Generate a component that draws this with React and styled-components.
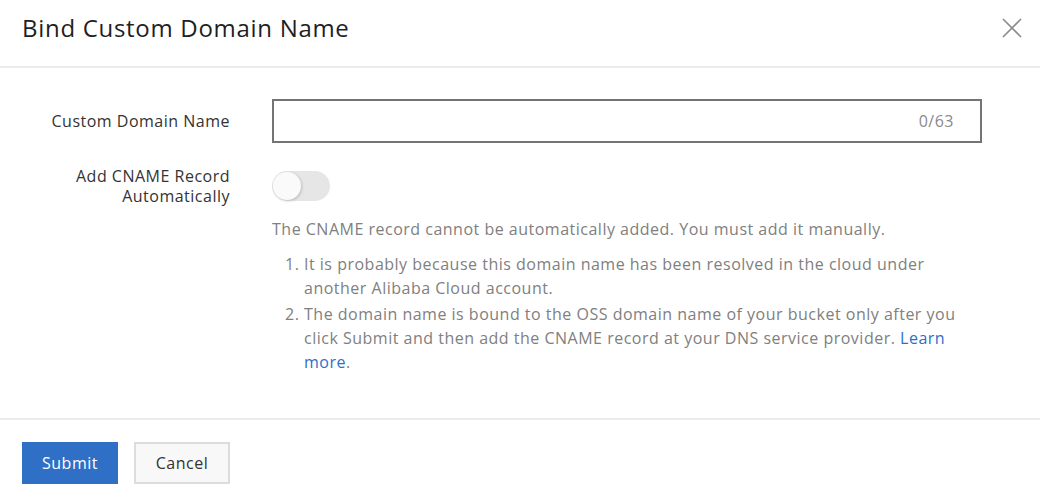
import React, { useState } from 'react';
import styled, { createGlobalStyle } from 'styled-components';

const GlobalStyle = createGlobalStyle`
  html, body {
    margin: 0;
    padding: 0;
    background: #fff;
  }
  body {
    font-family: 'Open Sans', 'Liberation Sans', Arial, sans-serif;
    color: #333;
    letter-spacing: 0.5px;
    -webkit-font-smoothing: antialiased;
  }
`;

const Dialog = styled.div`
  width: 1040px;
  height: 498px;
  display: flex;
  flex-direction: column;
  background: #fff;
`;

const Header = styled.div`
  height: 68px;
  display: flex;
  align-items: center;
  justify-content: space-between;
  padding: 0 16px 10px 22px;
  border-bottom: 2px solid #ebebeb;
  box-sizing: border-box;

  h2 {
    margin: 0;
    font-size: 24px;
    line-height: 32px;
    font-weight: 400;
    color: #1f1f1f;
    letter-spacing: 0.7px;
  }
`;

const CloseButton = styled.button`
  width: 24px;
  height: 24px;
  padding: 0;
  border: 0;
  background: none;
  cursor: pointer;
  display: flex;
  align-items: center;
  justify-content: center;
`;

const Body = styled.div`
  flex: 1;
  padding: 31px 58px 0 22px;
  display: flex;
  flex-direction: column;
  gap: 28px;
  border-bottom: 2px solid #ebebeb;
`;

const Row = styled.div`
  display: grid;
  grid-template-columns: 208px 1fr;
  column-gap: 42px;
  align-items: ${({ center }) => (center ? 'center' : 'start')};
`;

const Label = styled.label`
  text-align: right;
  font-size: 16px;
  line-height: 20px;
  color: #333;
  margin-top: ${({ offset }) => offset || 0}px;
`;

const InputBox = styled.div`
  height: 44px;
  display: flex;
  align-items: center;
  border: 2px solid #747474;
  box-sizing: border-box;
  padding: 0 26px 0 12px;

  input {
    flex: 1;
    min-width: 0;
    border: 0;
    outline: none;
    font: inherit;
    font-size: 16px;
    background: transparent;
  }

  span {
    font-size: 16px;
    color: #8a8a8a;
  }
`;

const Switch = styled.button`
  position: relative;
  display: block;
  width: 58px;
  height: 30px;
  border-radius: 15px;
  border: 0;
  padding: 0;
  background: ${({ on }) => (on ? '#2f6fc6' : '#e6e6e6')};
  cursor: pointer;

  &::after {
    content: '';
    position: absolute;
    top: 1px;
    left: ${({ on }) => (on ? '29px' : '1px')};
    width: 28px;
    height: 28px;
    border-radius: 50%;
    background: #fafafa;
    box-shadow: 1px 1px 3px rgba(0, 0, 0, 0.18);
  }
`;

const Help = styled.div`
  margin-top: 16px;
  font-size: 16px;
  line-height: 24px;
  color: #808080;

  p {
    margin: 0 0 11px;
  }

  ol {
    margin: 0;
    padding-left: 32px;
  }

  li {
    margin-bottom: 2px;
  }

  a {
    color: #2d6fc8;
    text-decoration: none;
  }
`;

const Footer = styled.div`
  height: 78px;
  padding: 22px 22px 0;
  box-sizing: border-box;
  display: flex;
  align-items: flex-start;
  gap: 16px;
`;

const Button = styled.button`
  width: 96px;
  height: 42px;
  font-family: inherit;
  font-size: 16px;
  letter-spacing: 0.5px;
  cursor: pointer;
  box-sizing: border-box;
  border: ${({ primary }) => (primary ? '0' : '2px solid #dcdcdc')};
  background: ${({ primary }) => (primary ? '#2f6fc6' : '#f8f8f8')};
  color: ${({ primary }) => (primary ? '#fff' : '#333')};
`;

export default function App() {
  const [auto, setAuto] = useState(false);
  const [value, setValue] = useState('');

  return (
    <>
      <GlobalStyle />
      <Dialog>
        <Header>
          <h2>Bind Custom Domain Name</h2>
          <CloseButton aria-label="Close">
            <svg width="20" height="20" viewBox="0 0 20 20">
              <path d="M1 1L19 19M19 1L1 19" stroke="#8c8c8c" strokeWidth="1.6" fill="none" />
            </svg>
          </CloseButton>
        </Header>

        <Body>
          <Row center>
            <Label>Custom Domain Name</Label>
            <InputBox>
              <input value={value} maxLength={63} onChange={(e) => setValue(e.target.value)} />
              <span>{value.length}/63</span>
            </InputBox>
          </Row>

          <Row>
            <Label offset={-5}>
              Add CNAME Record
              <br />
              Automatically
            </Label>
            <div>
              <Switch on={auto ? 1 : 0} onClick={() => setAuto(!auto)} aria-label="Toggle" />
              <Help>
                <p>The CNAME record cannot be automatically added. You must add it manually.</p>
                <ol>
                  <li>
                    It is probably because this domain name has been resolved in the cloud under
                    another Alibaba Cloud account.
                  </li>
                  <li>
                    The domain name is bound to the OSS domain name of your bucket only after you
                    click Submit and then add the CNAME record at your DNS service provider.{' '}
                    <a href="#learn">Learn more</a>.
                  </li>
                </ol>
              </Help>
            </div>
          </Row>
        </Body>

        <Footer>
          <Button primary>Submit</Button>
          <Button>Cancel</Button>
        </Footer>
      </Dialog>
    </>
  );
}
